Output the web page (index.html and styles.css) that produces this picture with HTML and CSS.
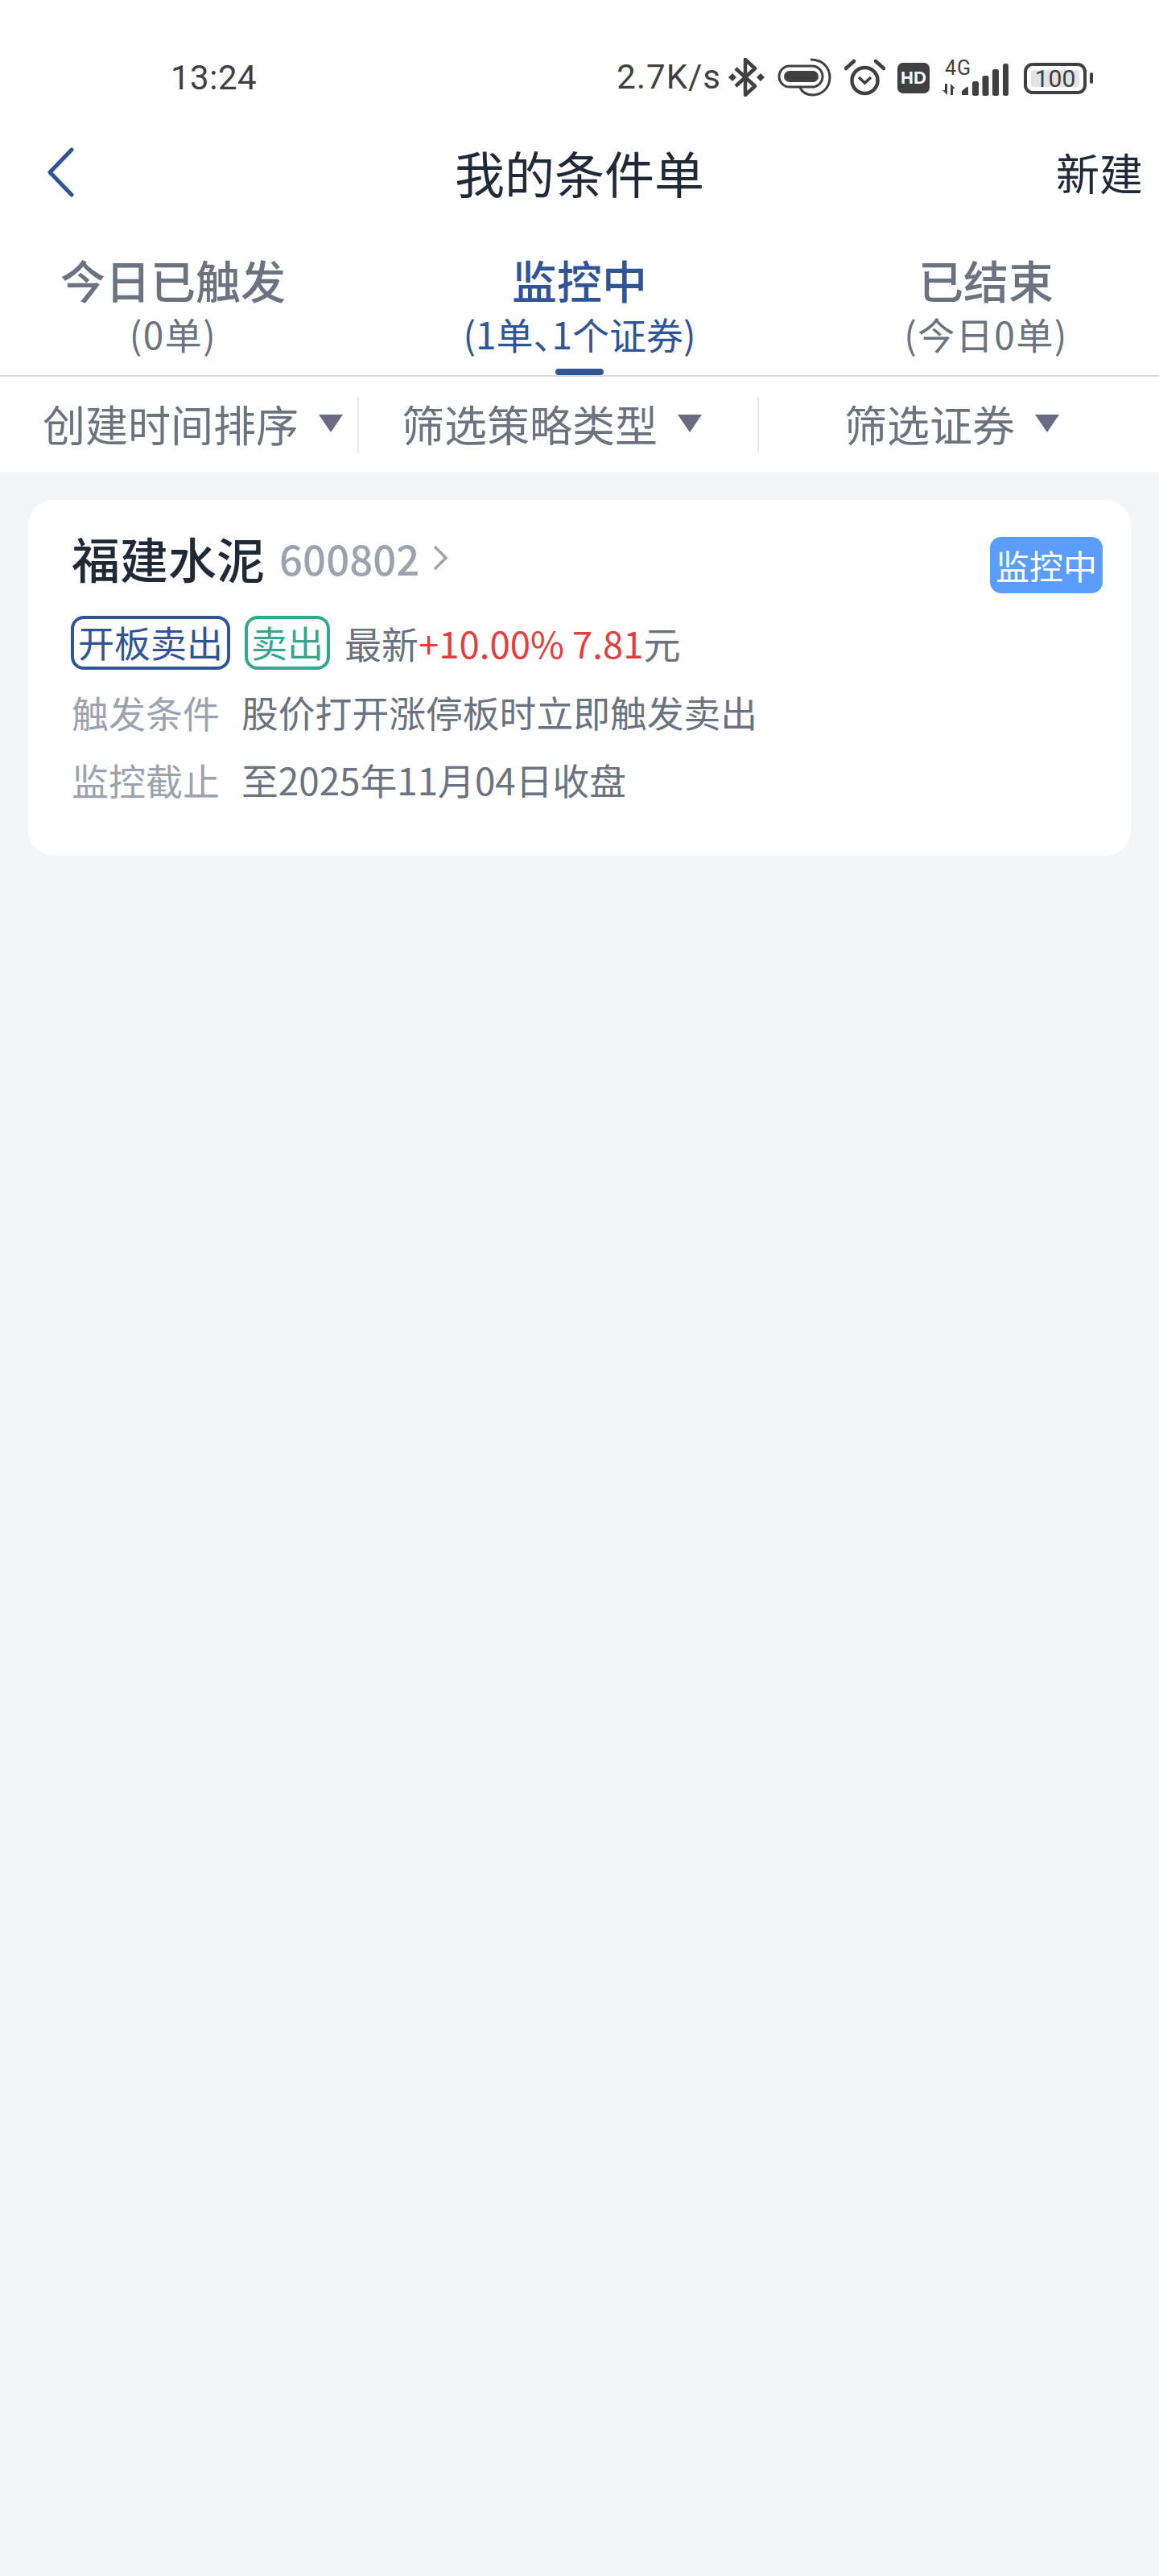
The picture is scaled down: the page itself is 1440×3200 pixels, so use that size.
FILE: index.html
```html
<html>
    <head>
        <meta charset="UTF-8">
        <link rel="stylesheet" href="styles.css">
    </head>
    <body>
        <div class="statusBar">
            <span class="hora">13:24</span>
            <div class="estado">
                <span class="velocidad">2.7K/s</span>
                <svg class="icoBt" width="45" height="48" viewBox="0 0 45 48">
                    <path d="M9 13 L33 35 L21 46 V2 L33 13 L9 35" fill="none" stroke="#404040" stroke-width="4.5" stroke-linejoin="round"/>
                    <path d="M5 19 L10 24 L5 29 L0 24 Z M40 19 L45 24 L40 29 L35 24 Z" fill="#404040"/>
                </svg>
                <svg class="icoPill" width="67" height="48" viewBox="0 0 67 48">
                    <rect x="2" y="10" width="54" height="26" rx="13" fill="none" stroke="#404040" stroke-width="3"/>
                    <rect x="8" y="16" width="43" height="14" rx="7" fill="#404040"/>
                    <path d="M41 2 C58 2 65 14 65 24 C65 38 54 46 44 46 C37 46 31 43 28 37" fill="none" stroke="#404040" stroke-width="3"/>
                </svg>
                <svg class="icoAlarm" width="51" height="48" viewBox="0 0 51 48">
                    <circle cx="25.5" cy="28" r="16" fill="none" stroke="#404040" stroke-width="4.5"/>
                    <path d="M18 24 L25.5 31 L33 24" fill="none" stroke="#404040" stroke-width="3.5"/>
                    <path d="M2 13 L12 4 M49 13 L39 4" stroke="#404040" stroke-width="4.5" stroke-linecap="round"/>
                </svg>
                <span class="hd">HD</span>
                <div class="red">
                    <svg width="83" height="48" viewBox="0 0 83 48">
                        <path d="M4 32 H7 V46 L1 40 H4 Z M11 46 H14 V38 H17 L11 32 Z" fill="#404040"/>
                        <path d="M25 41 L31 36 Q33 35 33 38 V46 H25 Z" fill="#404040"/>
                        <rect x="38" y="29" width="8" height="18" rx="2.5" fill="#404040"/>
                        <rect x="50.5" y="22" width="8" height="25" rx="2.5" fill="#404040"/>
                        <rect x="63" y="14" width="8" height="33" rx="2.5" fill="#404040"/>
                        <rect x="76" y="7" width="7" height="40" rx="2.5" fill="#404040"/>
                    </svg>
                    <span class="red4g">4G</span>
                </div>
                <div class="bateria"><span class="nivel">100</span></div>
                <span class="polo"></span>
            </div>
        </div>

        <div class="cabecera">
            <svg class="atras" width="33" height="62" viewBox="0 0 33 62">
                <path d="M30 3 L3 31 L30 59" fill="none" stroke="#2f5597" stroke-width="5" stroke-linecap="round" stroke-linejoin="round"/>
            </svg>
            <span class="titulo">我的条件单</span>
            <span class="nuevo">新建</span>
        </div>

        <div class="pestanas">
            <div class="pestana">
                <span class="pesNombre">今日已触发</span>
                <span class="pesCuenta">(0单)</span>
            </div>
            <div class="pestana activa">
                <span class="pesNombre">监控中</span>
                <span class="pesCuenta">(1单<span class="dun">、</span>1个证券)</span>
            </div>
            <div class="pestana">
                <span class="pesNombre">已结束</span>
                <span class="pesCuenta">(今日0单)</span>
            </div>
        </div>

        <div class="filtros">
            <div class="filtro uno">创建时间排序<i class="flecha"></i></div>
            <span class="sep"></span>
            <div class="filtro dos">筛选策略类型<i class="flecha"></i></div>
            <span class="sep"></span>
            <div class="filtro tres">筛选证券<i class="flecha"></i></div>
        </div>

        <div class="lista">
            <div class="tarjeta">
                <span class="estadoTag">监控中</span>
                <div class="filaNombre">
                    <span class="nombre">福建水泥</span>
                    <span class="codigo">600802</span>
                    <svg class="mas" width="20" height="32" viewBox="0 0 20 32">
                        <path d="M3 2 L17 16 L3 30" fill="none" stroke="#a3a3a3" stroke-width="3.5"/>
                    </svg>
                </div>
                <div class="filaTags">
                    <span class="tag azul">开板卖出</span>
                    <span class="tag verde">卖出</span>
                    <span class="precio">最新<span class="rojo">+10.00% 7.81</span>元</span>
                </div>
                <div class="filaDato">
                    <span class="etiqueta">触发条件</span>
                    <span class="valor">股价打开涨停板时立即触发卖出</span>
                </div>
                <div class="filaDato">
                    <span class="etiqueta">监控截止</span>
                    <span class="valor">至2025年11月04日收盘</span>
                </div>
            </div>
        </div>
    </body>
</html>
```

FILE: styles.css
```css
* {
    box-sizing: border-box;
}
html, body {
    margin: 0;
    padding: 0;
}
body {
    width: 1440px;
    height: 3200px;
    background-color: #f4f5f7;
    font-family: "Noto Sans CJK SC", "Noto Sans", sans-serif;
    overflow: hidden;
}

/* barra de estado */
.statusBar {
    height: 144px;
    padding: 72px 82px 0 212px;
    background-color: #fff;
    display: flex;
    justify-content: space-between;
    align-items: flex-start;
    color: #404040;
}
.hora {
    font-family: Roboto, sans-serif;
    font-size: 42px;
    line-height: 50px;
    letter-spacing: 0.5px;
}
.estado {
    display: flex;
    align-items: center;
    height: 48px;
}
.velocidad {
    font-family: Roboto, sans-serif;
    font-size: 42px;
    line-height: 50px;
    letter-spacing: 1px;
    margin-right: 9px;
}
.icoBt, .icoPill {
    margin-right: 16px;
}
.icoAlarm {
    margin-right: 15px;
}
.hd {
    width: 40px;
    height: 38px;
    margin-top: 2px;
    margin-right: 15px;
    border-radius: 7px;
    background-color: #404040;
    color: #fff;
    font-family: "Liberation Sans", sans-serif;
    font-weight: bold;
    font-size: 22px;
    line-height: 38px;
    text-align: center;
}
.red {
    width: 83px;
    height: 48px;
    margin-right: 19px;
    position: relative;
}
.red svg {
    display: block;
}
.red4g {
    position: absolute;
    left: 4px;
    top: 0;
    font-family: Roboto, sans-serif;
    font-size: 25px;
    line-height: 26px;
    letter-spacing: 1px;
}
.bateria {
    width: 78px;
    height: 39px;
    margin-top: 2px;
    padding: 5px;
    border: 4px solid #404040;
    border-radius: 11px;
    display: flex;
}
.nivel {
    flex: 1;
    background-color: #e3e3e3;
    border-radius: 3px;
    font-family: Roboto, sans-serif;
    font-size: 30px;
    line-height: 21px;
    text-align: center;
    white-space: nowrap;
}
.polo {
    width: 4px;
    height: 14px;
    margin-left: 4px;
    margin-top: 2px;
    border-radius: 2px;
    background-color: #404040;
}

/* cabecera */
.cabecera {
    height: 144px;
    padding: 0 20px 4px;
    background-color: #fff;
    display: grid;
    grid-template-columns: 1fr auto 1fr;
    align-items: center;
}
.atras {
    margin-left: 39px;
}
.titulo {
    font-size: 62px;
    line-height: 72px;
    color: #1f2937;
}
.nuevo {
    justify-self: end;
    font-size: 54px;
    line-height: 64px;
    color: #1f2937;
}

/* pestanas */
.pestanas {
    height: 180px;
    padding-top: 26px;
    background-color: #fff;
    border-bottom: 2px solid #d9dadd;
    display: grid;
    grid-template-columns: 430px 580px 430px;
}
.pestana {
    display: flex;
    flex-direction: column;
    align-items: center;
    position: relative;
    color: #6b7280;
}
.pesNombre {
    font-size: 56px;
    line-height: 66px;
    font-weight: 500;
}
.pesCuenta {
    font-size: 46px;
    line-height: 68px;
    letter-spacing: 1.5px;
}
.dun {
    font-feature-settings: "halt";
}
.activa {
    color: #2f5597;
}
.activa .pesCuenta {
    letter-spacing: 0;
}
.activa::after {
    content: "";
    position: absolute;
    left: 260px;
    bottom: 0;
    width: 60px;
    height: 8px;
    border-radius: 4px;
    background-color: #2f5597;
}

/* filtros */
.filtros {
    height: 118px;
    background-color: #fff;
    display: flex;
    align-items: center;
}
.filtro {
    display: flex;
    align-items: center;
    padding-bottom: 2px;
    font-size: 53px;
    line-height: 64px;
    color: #6b7280;
}
.uno {
    width: 444px;
    padding-left: 53px;
}
.dos {
    width: 495px;
    padding-left: 53px;
}
.tres {
    padding-left: 106px;
}
.sep {
    width: 2px;
    height: 69px;
    background-color: #e9eaee;
}
.flecha {
    width: 0;
    height: 0;
    margin-left: 25px;
    border-left: 15px solid transparent;
    border-right: 15px solid transparent;
    border-top: 22px solid #6b6b85;
}

/* lista */
.lista {
    padding: 35px 35px 0;
}
.tarjeta {
    height: 442px;
    padding: 37px 0 0 54px;
    background-color: #fff;
    border-radius: 32px;
    position: relative;
}
.estadoTag {
    position: absolute;
    top: 46px;
    right: 35px;
    width: 140px;
    height: 70px;
    border-radius: 14px;
    background-color: #5b9dfb;
    color: #fff;
    font-size: 42px;
    line-height: 70px;
    text-align: center;
}
.filaNombre {
    display: flex;
    align-items: center;
    height: 70px;
}
.nombre {
    font-size: 60px;
    line-height: 70px;
    font-weight: 500;
    color: #1f2937;
}
.codigo {
    margin-left: 18px;
    font-size: 51px;
    line-height: 70px;
    font-weight: 500;
    color: #9ca3af;
}
.mas {
    margin-left: 16px;
}
.filaTags {
    display: flex;
    align-items: center;
    margin-top: 37px;
    margin-left: -1px;
}
.tag {
    height: 67px;
    border: 4px solid;
    border-radius: 16px;
    font-size: 45px;
    line-height: 57px;
    white-space: nowrap;
}
.azul {
    padding: 0 5px;
    color: #2f5597;
}
.verde {
    margin-left: 18px;
    padding: 0 4px;
    color: #34a88c;
}
.precio {
    margin-left: 18px;
    padding-bottom: 2px;
    font-size: 46px;
    line-height: 60px;
    color: #6b7280;
}
.rojo {
    font-size: 45.5px;
    color: #e53e3e;
}
.filaDato {
    display: flex;
    margin-top: 23px;
    font-size: 46px;
    line-height: 59px;
}
.filaDato + .filaDato {
    margin-top: 25px;
}
.etiqueta {
    width: 211px;
    color: #9ca3af;
}
.valor {
    font-size: 45.8px;
    color: #6b7280;
}
```
